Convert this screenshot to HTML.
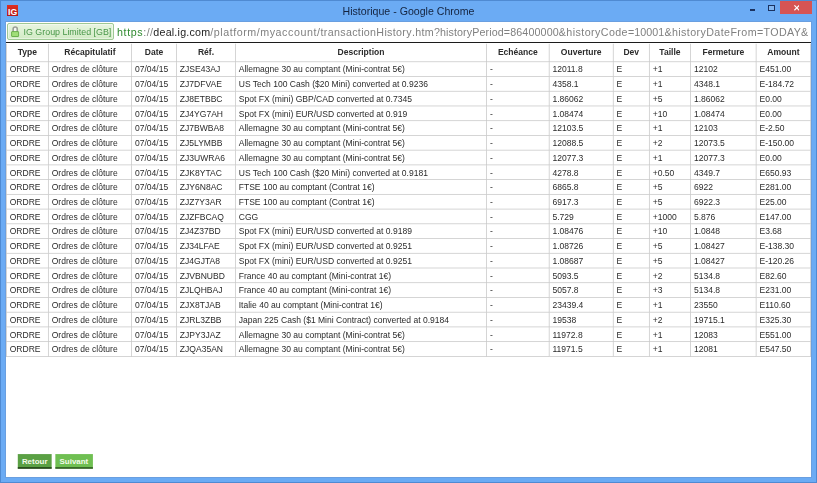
<!DOCTYPE html>
<html lang="fr">
<head>
<meta charset="utf-8">
<title>Historique - Google Chrome</title>
<style>
html,body{margin:0;padding:0;}
body{width:817px;height:483px;overflow:hidden;background:#6babf4;position:relative;font-family:"Liberation Sans",sans-serif;}
#frame{position:absolute;left:0;top:0;width:815px;height:481px;border:1px solid #4f8ad2;}
#inner{position:absolute;left:5px;top:21px;width:805.4px;height:455.2px;border:1px solid #6a9fe0;}
#icon{position:absolute;left:7px;top:5px;width:11px;height:11px;}
#title{position:absolute;left:0;top:3.6px;width:817px;text-align:center;font-size:10.6px;line-height:14px;color:#14233e;white-space:nowrap;}
#min{position:absolute;left:750px;top:8.7px;width:5.2px;height:1.9px;background:#1b3260;}
#max{position:absolute;left:768.2px;top:4.9px;width:4.8px;height:3.9px;border:1px solid #1b3260;border-top-width:1.7px;background:#82b6f0;}
#close{position:absolute;left:780.4px;top:0.6px;width:31.4px;height:13.7px;background:#d65454;}
#close svg{position:absolute;left:13.3px;top:4.8px;}
#bar{position:absolute;left:6px;top:22px;width:805px;height:24px;background:#fff;}
#barline{position:absolute;left:6px;top:42px;width:805px;height:1.2px;background:#1c1c1c;}
#chip{position:absolute;left:7.2px;top:23.2px;width:107px;height:17.2px;box-sizing:border-box;border:1px solid #9fc894;border-radius:2px;background:linear-gradient(#e8f5e0,#d2ebc5);box-shadow:inset 0 0 0 1px rgba(255,255,255,.45);}
#chip span{position:absolute;left:15.5px;top:2.1px;font-size:8.9px;line-height:12px;color:#479647;white-space:nowrap;}
#lock{position:absolute;left:2.7px;top:2px;}
#url{position:absolute;left:117.3px;top:25.1px;font-size:10.7px;line-height:14px;color:#808080;white-space:nowrap;}
#url,#title,#chip{will-change:transform;}
#url .s{color:#2f8a2f;}
#url .h{color:#222;}
#content{position:absolute;left:6px;top:43px;width:805px;height:433.8px;background:#fff;overflow:hidden;}
#page{position:absolute;left:0;top:0;width:1093.01px;height:589.27px;transform:scale(0.7365);transform-origin:0 0;}
table{margin-top:0.81px;border-collapse:collapse;table-layout:fixed;width:1092px;margin-left:0;font-size:11.6px;color:#2b2b2b;}
th,td{border:1px solid #c6c6c6;padding:1.25px 0 0 4px;height:17.75px;line-height:17.75px;text-align:left;white-space:nowrap;overflow:hidden;font-weight:normal;}
th{font-weight:bold;text-align:center;height:21.5px;line-height:21.5px;padding:0 0 2.5px 0;border-top:none;}
.btn{position:absolute;top:558.32px;height:19.5px;line-height:17.5px;font-weight:bold;font-size:10.8px;text-align:center;box-sizing:border-box;border-bottom:2px solid #1d3a12;border-top:1px solid rgba(255,255,255,.12);color:#f4fbea;}
#b1{left:15.61px;width:46.71px;background:#5aa044;}
#b2{left:66.80px;width:50.78px;background:#6fbf52;border-bottom-color:#2a521d;}
</style>
</head>
<body>
<div id="frame"></div><div id="inner"></div>
<svg id="icon" width="11" height="11" viewBox="0 0 11 11"><defs><linearGradient id="ig" x1="0" y1="0" x2="0" y2="1"><stop offset="0" stop-color="#df2f22"/><stop offset="1" stop-color="#b31a1a"/></linearGradient></defs><rect width="11" height="11" fill="url(#ig)"/><text x="1" y="9.9" font-family="Liberation Sans, sans-serif" font-weight="bold" font-size="9.4" textLength="9.2" lengthAdjust="spacingAndGlyphs" fill="#fff">IG</text></svg>
<div id="title">Historique - Google Chrome</div>
<div id="min"></div><div id="max"></div>
<div id="close"><svg width="5.6" height="5.6" viewBox="0 0 6 6"><path d="M0.4 0.4L5.6 5.6M5.6 0.4L0.4 5.6" stroke="#fff" stroke-width="1.25" fill="none"/></svg></div>
<div id="bar"></div>
<div id="chip"><svg id="lock" width="9" height="12" viewBox="0 0 9 12"><path d="M2.15 5.8V3.1a2.05 2.05 0 0 1 4.1 0V5.8" fill="#f6faf3" stroke="#9a9f97" stroke-width="1.6"/><rect x="0.6" y="5.6" width="7" height="4.9" rx="0.5" fill="#a0de78" stroke="#57a238" stroke-width="0.8"/></svg><span>IG Group Limited [GB]</span></div>
<div id="url"><span class="s" style="letter-spacing:0.626px">https</span><span style="letter-spacing:0.359px">://</span><span class="h" style="letter-spacing:0.213px">deal.ig.com</span><span style="letter-spacing:0.535px">/platform/</span><span style="letter-spacing:0.564px">myaccount/</span><span style="letter-spacing:0.325px">transactionHistory</span><span style="letter-spacing:0.301px">.htm</span><span style="letter-spacing:0.112px">?historyPeriod</span><span style="letter-spacing:0.134px">=86400000</span><span style="letter-spacing:0.419px">&amp;historyCode</span><span style="letter-spacing:0.072px">=10001</span><span style="letter-spacing:0.405px">&amp;historyDateFrom</span><span style="letter-spacing:0.337px">=TODAY</span><span style="letter-spacing:0.159px">&amp;</span></div>
<div id="barline"></div>
<div id="content"><div id="page">
<table><colgroup><col style="width:57.00px"><col style="width:113.00px"><col style="width:61.00px"><col style="width:80.00px"><col style="width:341.00px"><col style="width:85.00px"><col style="width:87.00px"><col style="width:49.00px"><col style="width:56.00px"><col style="width:89.00px"><col style="width:74.00px"></colgroup>
<thead><tr><th>Type</th><th>Récapitulatif</th><th>Date</th><th>Réf.</th><th>Description</th><th>Echéance</th><th>Ouverture</th><th>Dev</th><th>Taille</th><th>Fermeture</th><th>Amount</th></tr></thead>
<tbody>
<tr><td>ORDRE</td><td>Ordres de clôture</td><td>07/04/15</td><td>ZJSE43AJ</td><td>Allemagne 30 au comptant (Mini-contrat 5€)</td><td>-</td><td>12011.8</td><td>E</td><td>+1</td><td>12102</td><td>E451.00</td></tr>
<tr><td>ORDRE</td><td>Ordres de clôture</td><td>07/04/15</td><td>ZJ7DFVAE</td><td>US Tech 100 Cash ($20 Mini) converted at 0.9236</td><td>-</td><td>4358.1</td><td>E</td><td>+1</td><td>4348.1</td><td>E-184.72</td></tr>
<tr><td>ORDRE</td><td>Ordres de clôture</td><td>07/04/15</td><td>ZJ8ETBBC</td><td>Spot FX (mini) GBP/CAD converted at 0.7345</td><td>-</td><td>1.86062</td><td>E</td><td>+5</td><td>1.86062</td><td>E0.00</td></tr>
<tr><td>ORDRE</td><td>Ordres de clôture</td><td>07/04/15</td><td>ZJ4YG7AH</td><td>Spot FX (mini) EUR/USD converted at 0.919</td><td>-</td><td>1.08474</td><td>E</td><td>+10</td><td>1.08474</td><td>E0.00</td></tr>
<tr><td>ORDRE</td><td>Ordres de clôture</td><td>07/04/15</td><td>ZJ7BWBA8</td><td>Allemagne 30 au comptant (Mini-contrat 5€)</td><td>-</td><td>12103.5</td><td>E</td><td>+1</td><td>12103</td><td>E-2.50</td></tr>
<tr><td>ORDRE</td><td>Ordres de clôture</td><td>07/04/15</td><td>ZJ5LYMBB</td><td>Allemagne 30 au comptant (Mini-contrat 5€)</td><td>-</td><td>12088.5</td><td>E</td><td>+2</td><td>12073.5</td><td>E-150.00</td></tr>
<tr><td>ORDRE</td><td>Ordres de clôture</td><td>07/04/15</td><td>ZJ3UWRA6</td><td>Allemagne 30 au comptant (Mini-contrat 5€)</td><td>-</td><td>12077.3</td><td>E</td><td>+1</td><td>12077.3</td><td>E0.00</td></tr>
<tr><td>ORDRE</td><td>Ordres de clôture</td><td>07/04/15</td><td>ZJK8YTAC</td><td>US Tech 100 Cash ($20 Mini) converted at 0.9181</td><td>-</td><td>4278.8</td><td>E</td><td>+0.50</td><td>4349.7</td><td>E650.93</td></tr>
<tr><td>ORDRE</td><td>Ordres de clôture</td><td>07/04/15</td><td>ZJY6N8AC</td><td>FTSE 100 au comptant (Contrat 1€)</td><td>-</td><td>6865.8</td><td>E</td><td>+5</td><td>6922</td><td>E281.00</td></tr>
<tr><td>ORDRE</td><td>Ordres de clôture</td><td>07/04/15</td><td>ZJZ7Y3AR</td><td>FTSE 100 au comptant (Contrat 1€)</td><td>-</td><td>6917.3</td><td>E</td><td>+5</td><td>6922.3</td><td>E25.00</td></tr>
<tr><td>ORDRE</td><td>Ordres de clôture</td><td>07/04/15</td><td>ZJZFBCAQ</td><td>CGG</td><td>-</td><td>5.729</td><td>E</td><td>+1000</td><td>5.876</td><td>E147.00</td></tr>
<tr><td>ORDRE</td><td>Ordres de clôture</td><td>07/04/15</td><td>ZJ4Z37BD</td><td>Spot FX (mini) EUR/USD converted at 0.9189</td><td>-</td><td>1.08476</td><td>E</td><td>+10</td><td>1.0848</td><td>E3.68</td></tr>
<tr><td>ORDRE</td><td>Ordres de clôture</td><td>07/04/15</td><td>ZJ34LFAE</td><td>Spot FX (mini) EUR/USD converted at 0.9251</td><td>-</td><td>1.08726</td><td>E</td><td>+5</td><td>1.08427</td><td>E-138.30</td></tr>
<tr><td>ORDRE</td><td>Ordres de clôture</td><td>07/04/15</td><td>ZJ4GJTA8</td><td>Spot FX (mini) EUR/USD converted at 0.9251</td><td>-</td><td>1.08687</td><td>E</td><td>+5</td><td>1.08427</td><td>E-120.26</td></tr>
<tr><td>ORDRE</td><td>Ordres de clôture</td><td>07/04/15</td><td>ZJVBNUBD</td><td>France 40 au comptant (Mini-contrat 1€)</td><td>-</td><td>5093.5</td><td>E</td><td>+2</td><td>5134.8</td><td>E82.60</td></tr>
<tr><td>ORDRE</td><td>Ordres de clôture</td><td>07/04/15</td><td>ZJLQHBAJ</td><td>France 40 au comptant (Mini-contrat 1€)</td><td>-</td><td>5057.8</td><td>E</td><td>+3</td><td>5134.8</td><td>E231.00</td></tr>
<tr><td>ORDRE</td><td>Ordres de clôture</td><td>07/04/15</td><td>ZJX8TJAB</td><td>Italie 40 au comptant (Mini-contrat 1€)</td><td>-</td><td>23439.4</td><td>E</td><td>+1</td><td>23550</td><td>E110.60</td></tr>
<tr><td>ORDRE</td><td>Ordres de clôture</td><td>07/04/15</td><td>ZJRL3ZBB</td><td>Japan 225 Cash ($1 Mini Contract) converted at 0.9184</td><td>-</td><td>19538</td><td>E</td><td>+2</td><td>19715.1</td><td>E325.30</td></tr>
<tr><td>ORDRE</td><td>Ordres de clôture</td><td>07/04/15</td><td>ZJPY3JAZ</td><td>Allemagne 30 au comptant (Mini-contrat 5€)</td><td>-</td><td>11972.8</td><td>E</td><td>+1</td><td>12083</td><td>E551.00</td></tr>
<tr><td>ORDRE</td><td>Ordres de clôture</td><td>07/04/15</td><td>ZJQA35AN</td><td>Allemagne 30 au comptant (Mini-contrat 5€)</td><td>-</td><td>11971.5</td><td>E</td><td>+1</td><td>12081</td><td>E547.50</td></tr>
</tbody></table>
<div class="btn" id="b1">Retour</div><div class="btn" id="b2">Suivant</div>
</div></div>
</body>
</html>
